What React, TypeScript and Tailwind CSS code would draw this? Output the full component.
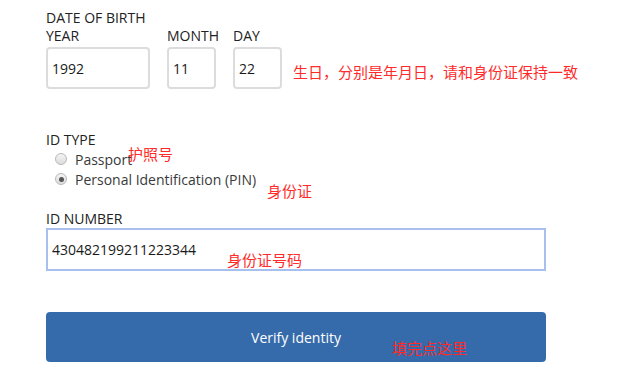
import React from "react";

const cjk = { fontFamily: '"Noto Sans CJK SC", sans-serif' };

function Note({ text, x, y }: { text: string; x: number; y: number }) {
  return (
    <div
      className="absolute text-[15px] font-normal leading-[15px] text-[#ff2a2a] whitespace-nowrap"
      style={{ ...cjk, left: x, top: y }}
    >
      {text}
    </div>
  );
}

function Radio({ checked }: { checked?: boolean }) {
  return (
    <span className="flex h-[12px] w-[12px] items-center justify-center rounded-full border border-[#b8b8b8] bg-gradient-to-b from-[#f4f4f4] to-[#dcdcdc]">
      {checked && <span className="h-[5px] w-[5px] rounded-full bg-[#555]" />}
    </span>
  );
}

export default function App() {
  return (
    <div
      className="relative h-[380px] w-[623px] overflow-hidden bg-white pl-[46px] pt-[9px] text-[14px] text-[#222]"
      style={{ fontFamily: '"Open Sans", sans-serif' }}
    >
      <div className="leading-[18px]">DATE OF BIRTH</div>
      <div className="flex gap-[17px]">
        <div className="flex w-[104px] flex-col">
          <div className="mb-[2px] leading-[18px]">YEAR</div>
          <div className="flex h-[42px] items-center rounded-[4px] border-2 border-[#dcdcdc] pl-[4px] text-[#1a1a1a]">1992</div>
        </div>
        <div className="flex w-[49px] flex-col">
          <div className="mb-[2px] leading-[18px]">MONTH</div>
          <div className="flex h-[42px] items-center rounded-[4px] border-2 border-[#dcdcdc] pl-[4px] text-[#1a1a1a]">11</div>
        </div>
        <div className="flex w-[49px] flex-col">
          <div className="mb-[2px] leading-[18px]">DAY</div>
          <div className="flex h-[42px] items-center rounded-[4px] border-2 border-[#dcdcdc] pl-[4px] text-[#1a1a1a]">22</div>
        </div>
      </div>

      <div className="mt-[42px] leading-[18px]">ID TYPE</div>
      <div className="flex flex-col pl-[9px] text-[#3a3a3a]">
        <div className="flex h-[20px] items-center gap-[8px]">
          <Radio />
          <span>Passport</span>
        </div>
        <div className="flex h-[20px] items-center gap-[8px]">
          <Radio checked />
          <span>Personal Identification (PIN)</span>
        </div>
      </div>

      <div className="mt-[21px] leading-[18px]">ID NUMBER</div>
      <div className="flex h-[43px] w-[500px] items-center border-2 border-[#a8c0ee] pl-[4px] text-[#1a1a1a]">
        430482199211223344
      </div>

      <button className="mt-[41px] flex h-[50px] w-[500px] items-center justify-center rounded-[4px] bg-[#366bab] text-[14px] text-white">
        Verify identity
      </button>

      <Note text="生日，分别是年月日，请和身份证保持一致" x={293} y={64} />
      <Note text="护照号" x={128} y={146} />
      <Note text="身份证" x={267} y={183} />
      <Note text="身份证号码" x={227} y={252} />
      <Note text="填完点这里" x={392} y={340} />
    </div>
  );
}
